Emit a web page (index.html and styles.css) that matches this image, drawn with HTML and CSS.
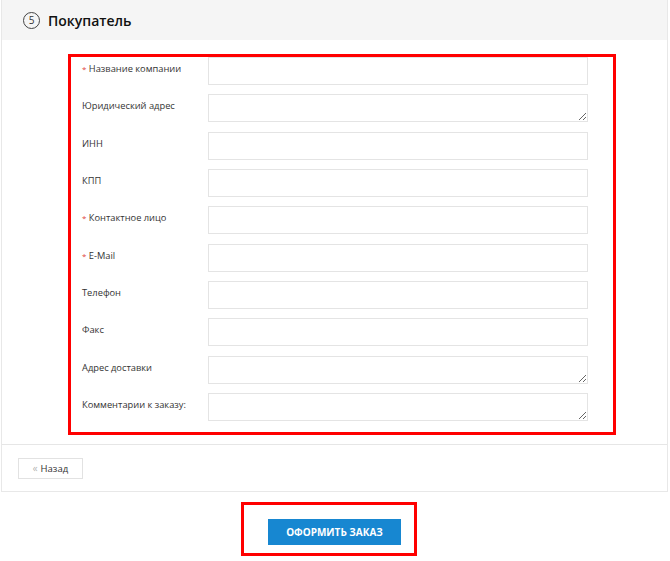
FILE: index.html
```html
<!DOCTYPE html>
<html lang="ru">
<head>
<meta charset="utf-8">
<title>Покупатель</title>
<link rel="stylesheet" href="styles.css">
</head>
<body>
<div class="panel">
  <div class="panel-head">
    <span class="step">5</span>
    <span class="title">Покупатель</span>
  </div>
  <div class="panel-body">
    <div class="form-box">
      <div class="row"><label class="lbl"><span class="req">*</span> Название компании</label><input class="field" type="text"></div>
      <div class="row"><label class="lbl">Юридический адрес</label><textarea class="field area"></textarea></div>
      <div class="row"><label class="lbl">ИНН</label><input class="field" type="text"></div>
      <div class="row"><label class="lbl">КПП</label><input class="field" type="text"></div>
      <div class="row"><label class="lbl"><span class="req">*</span> Контактное лицо</label><input class="field" type="text"></div>
      <div class="row"><label class="lbl"><span class="req">*</span> E-Mail</label><input class="field" type="text"></div>
      <div class="row"><label class="lbl">Телефон</label><input class="field" type="text"></div>
      <div class="row"><label class="lbl">Факс</label><input class="field" type="text"></div>
      <div class="row"><label class="lbl">Адрес доставки</label><textarea class="field area"></textarea></div>
      <div class="row"><label class="lbl">Комментарии к заказу:</label><textarea class="field area"></textarea></div>
    </div>
  </div>
  <div class="panel-foot">
    <button class="back" type="button"><span class="chev">&#171;</span> Назад</button>
  </div>
</div>
<div class="order">
  <div class="order-box">
    <button class="order-btn" type="button">Оформить заказ</button>
  </div>
</div>
</body>
</html>
```
FILE: styles.css
```css
* { box-sizing: border-box; }
html, body { margin: 0; padding: 0; background: #fff; }
body {
  font-family: "Open Sans", "DejaVu Sans", sans-serif;
  color: #333;
  width: 670px;
}
.panel {
  margin: 0 2px 0 1px;
  border: 1px solid #e8e8e8;
  border-top: none;
}
.panel-head {
  height: 40px;
  background: #f5f5f5;
  display: flex;
  align-items: center;
  padding-left: 21px;
  gap: 8px;
}
.step {
  width: 17px;
  height: 17px;
  border: 1px solid #444;
  border-radius: 50%;
  display: flex;
  align-items: center;
  justify-content: center;
  font-size: 10px;
  color: #333;
  line-height: 1;
}
.title {
  font-size: 14px;
  font-weight: 600;
  color: #111;
}
.panel-body {
  padding: 14px 0 9px 66px;
}
.form-box {
  width: 548px;
  border: 3px solid #ff0000;
  padding: 0 25px 11px 11px;
  display: flex;
  flex-direction: column;
  gap: 9.33px;
}
.row {
  display: flex;
  align-items: flex-start;
  height: 28px;
}
.lbl {
  width: 126px;
  font-size: 9.3px;
  color: #333;
  padding-top: 5px;
  line-height: 13px;
}
.req { color: #e0443c; font-size: 8px; }
.field {
  flex: 1;
  height: 28px;
  border: 1px solid #e4e4e4;
  background: #fff;
  margin: 0;
  padding: 4px 6px;
  font-family: inherit;
  outline: none;
}
.area {
  resize: vertical;
  display: block;
}
.panel-foot {
  border-top: 1px solid #e6e6e6;
  padding: 13px 16px 12px;
}
.back {
  width: 65px;
  height: 21px;
  border: 1px solid #e2e2e2;
  background: #fff;
  font-family: inherit;
  font-size: 9.5px;
  color: #333;
  padding: 0;
  display: flex;
  align-items: center;
  justify-content: center;
  gap: 3px;
  cursor: pointer;
}
.chev { color: #888; font-size: 11px; font-weight: 300; line-height: 1; margin-top: -2px; }
.order {
  padding-top: 10px;
  padding-left: 241px;
}
.order-box {
  width: 176px;
  height: 54px;
  border: 3px solid #ff0000;
  display: flex;
  align-items: center;
  padding-left: 24px;
}
.order-btn {
  width: 133px;
  height: 26px;
  margin-top: 6px;
  background: #1787d1;
  border: none;
  color: #fff;
  font-family: inherit;
  font-weight: 700;
  font-size: 10px;
  text-transform: uppercase;
  cursor: pointer;
}
```
